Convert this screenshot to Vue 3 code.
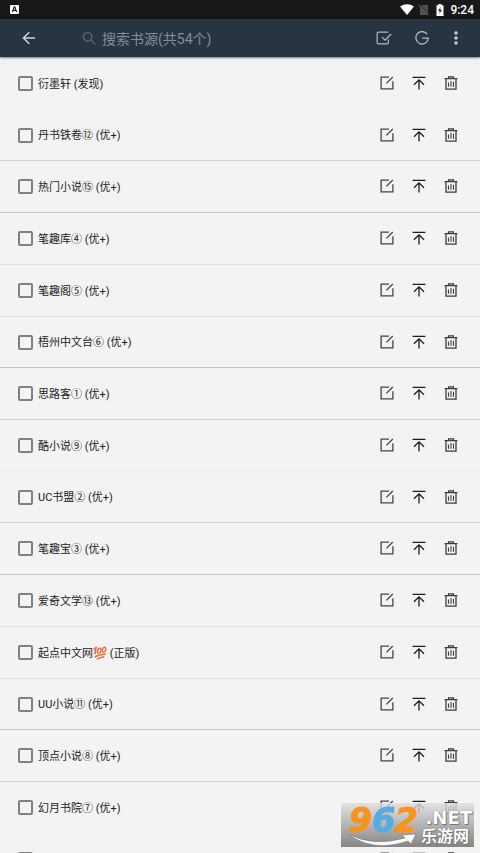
<script setup>
import { ref } from 'vue'

const sources = ref([
  { name: '衍墨轩', tag: '(发现)' },
  { name: '丹书铁卷⑫', tag: '(优+)' },
  { name: '热门小说⑮', tag: '(优+)' },
  { name: '笔趣库④', tag: '(优+)' },
  { name: '笔趣阁⑤', tag: '(优+)' },
  { name: '梧州中文台⑥', tag: '(优+)' },
  { name: '思路客①', tag: '(优+)' },
  { name: '酷小说⑨', tag: '(优+)' },
  { name: 'UC书盟②', tag: '(优+)' },
  { name: '笔趣宝③', tag: '(优+)' },
  { name: '爱奇文学⑬', tag: '(优+)' },
  { name: '起点中文网', tag: '(正版)', hundred: true },
  { name: 'UU小说⑪', tag: '(优+)' },
  { name: '顶点小说⑧', tag: '(优+)' },
  { name: '幻月书院⑦', tag: '(优+)' },
  { name: '', tag: '' },
])
const query = ref('')
</script>

<template>
  <div class="screen">
    <div class="status">
      <svg class="status-app" viewBox="0 0 9 9" aria-hidden="true">
        <rect width="9" height="9" rx="1" fill="#fff" />
        <path d="M2.4 7 4.1 2h.8l1.7 5M3.2 5.4h2.6" fill="none" stroke="#181818" stroke-width="1.1" />
      </svg>
      <div class="status-right">
        <svg class="wifi" viewBox="0 0 14 11" aria-hidden="true">
          <path d="M0 2.6C4-.7 10-.7 14 2.6L7 11z" fill="#fff" />
        </svg>
        <svg class="sim" viewBox="0 0 11 12" aria-hidden="true">
          <path d="M4 1h6v10H2V3z" fill="#505050" />
          <path d="M1.3 .4 11 10.6" stroke="#181818" stroke-width="1" />
          <path d="M.5 .8 10.5 11.3" stroke="#6a6a6a" stroke-width="1" />
        </svg>
        <svg class="battery" viewBox="0 0 8 12" aria-hidden="true">
          <path d="M2.5 0h3v1.2H7.5V12H.5V1.2h2z" fill="#fff" />
          <path d="M4.6 2.8 2.2 7h1.6l-.5 3L5.8 5.8H4.2z" fill="#181818" />
        </svg>
        <span class="clock">9:24</span>
      </div>
    </div>

    <header class="bar">
      <button class="icon-btn" type="button" aria-label="返回">
        <svg width="16" height="16" viewBox="0 0 16 16" fill="none" stroke="#d0d4d8" stroke-width="1.5">
          <path d="M14 8H2.5M8.2 2.2 2.4 8l5.8 5.8" />
        </svg>
      </button>
      <label class="search">
        <svg width="14" height="14" viewBox="0 0 14 14" fill="none" stroke="#5c6570" stroke-width="1.4" aria-hidden="true">
          <circle cx="5.6" cy="5.8" r="4.2" />
          <path d="m8.6 8.8 4.8 4.8" />
        </svg>
        <input v-model="query" type="text" placeholder="搜索书源(共54个)" aria-label="搜索书源" />
      </label>
      <button class="icon-btn check-all" type="button" aria-label="校验">
        <svg width="16" height="14" viewBox="0 0 16 14" fill="none" stroke="#b4b9be" stroke-width="1.2">
          <path d="M12.4 1.1H2.6Q1.1 1.1 1.1 2.6v8.8q0 1.5 1.5 1.5h8.3q1.5 0 1.5-1.5V8.6" />
          <path d="m6 6.2 3 3L15.2 3" />
        </svg>
      </button>
      <button class="icon-btn group" type="button" aria-label="分组">
        <svg width="16" height="14" viewBox="0 0 16 14" fill="none" stroke="#b4b9be" stroke-width="1.3">
          <path d="M13.2 3.2A6.2 6.2 0 1 0 14.3 7.2H8.2" />
        </svg>
      </button>
      <button class="icon-btn more" type="button" aria-label="更多">
        <svg width="4" height="14" viewBox="0 0 4 14" fill="#c4c8cc">
          <circle cx="2" cy="2" r="1.8" /><circle cx="2" cy="7" r="1.8" /><circle cx="2" cy="12" r="1.8" />
        </svg>
      </button>
    </header>

    <ul class="list">
      <li v-for="(s, i) in sources" :key="i" class="row">
        <label class="pick">
          <input type="checkbox" :aria-label="s.name || '书源'" />
          <span class="name">{{ s.name }}<svg
            v-if="s.hundred" class="hundred" viewBox="0 0 14 14" fill="none" stroke="#e8733f" role="img" aria-label="100">
            <path d="m.8 3.4 2-1.5L2 8.2" stroke-width="1.8" />
            <ellipse cx="6.2" cy="4.7" rx="1.6" ry="2.6" stroke-width="1.5" transform="rotate(14 6.2 4.7)" />
            <ellipse cx="11" cy="3.8" rx="1.6" ry="2.6" stroke-width="1.5" transform="rotate(14 11 3.8)" />
            <path d="M1.5 11Q6 8.7 12.8 8.1M4 13.2Q7 11.3 11.2 10.8" stroke-width="1.5" />
          </svg> {{ s.tag }}</span>
        </label>
        <div class="actions">
          <button type="button" aria-label="编辑">
            <svg width="14" height="14" viewBox="0 0 14 14" fill="none" stroke="#444" stroke-width="1.3">
              <path d="M9 1.1H1.1v11.8h11.8V5.2M6.4 7.4 12.8 1" />
            </svg>
          </button>
          <button type="button" aria-label="置顶">
            <svg width="14" height="14" viewBox="0 0 14 14" fill="none" stroke="#1c1c1c" stroke-width="1.3">
              <path d="M.6 1.4h12.8M7 13.4V4M2 8.8l5-5 5 5" />
            </svg>
          </button>
          <button type="button" aria-label="删除">
            <svg width="14" height="14" viewBox="0 0 14 14" fill="none" stroke="#3c3c3c" stroke-width="1.3">
              <path d="M.6 2.6h12.8M4.6 2.4V.8h4.8v1.6M2 2.8v10.4h10V2.8" />
              <path d="M4.5 6.4v4.4M7 5v5.8M9.5 5.8v5" stroke-width="1.1" />
            </svg>
          </button>
        </div>
      </li>
    </ul>

    <div class="mark">
      <svg class="swoosh" viewBox="0 0 133 44" aria-hidden="true">
        <path d="M7 31Q32 44 64 35L61 32 75 31 70 41 67 38Q32 50 7 31z" fill="#f8f8f8" stroke="#777" stroke-width=".6" />
      </svg>
      <div class="digits"><span>9</span><span class="blue">6</span><span>2</span></div>
      <div class="words"><span class="net">.NET</span><span class="cn">乐游网</span></div>
    </div>
  </div>
</template>

<style>
body {
  background: #f3f3f3;
}
</style>

<style scoped>
.screen {
  position: relative;
  display: flex;
  flex-direction: column;
  height: 100vh;
  overflow: hidden;
  background: #f3f3f3;
  font-family: Roboto, "Noto Sans CJK SC", sans-serif;
  color: #222;
}
svg {
  display: block;
}
button {
  display: flex;
  align-items: center;
  justify-content: center;
  padding: 0;
  border: 0;
  background: none;
}
.status {
  flex: none;
  display: flex;
  align-items: center;
  justify-content: space-between;
  height: 19px;
  padding: 0 6px 0 10px;
  background: #181818;
}
.status-app {
  width: 9px;
  height: 9px;
}
.status-right {
  display: flex;
  align-items: center;
}
.wifi {
  width: 14px;
  height: 11px;
  margin-right: 4px;
}
.sim {
  width: 11px;
  height: 12px;
  margin-right: 7px;
}
.battery {
  width: 8px;
  height: 12px;
  margin-right: 6px;
}
.clock {
  padding-top: 1px;
  font-size: 12px;
  font-weight: 500;
  line-height: 18px;
  color: #fff;
}
.bar {
  flex: none;
  position: relative;
  display: flex;
  align-items: center;
  height: 38px;
  padding: 0 22px 0 21px;
  background: #293442;
  box-shadow: 0 1px 2px rgba(0, 0, 0, 0.5);
}
.icon-btn {
  flex: none;
}
.search {
  flex: 1;
  display: flex;
  align-items: center;
  gap: 6px;
  min-width: 0;
  margin-left: 45px;
}
.search svg {
  flex: none;
}
.search input {
  flex: 1;
  min-width: 0;
  height: 30px;
  padding: 2px 0 0;
  border: 0;
  outline: 0;
  background: none;
  color: #fff;
  font: inherit;
  font-size: 14px;
}
.search input::placeholder {
  color: #878d95;
  opacity: 1;
}
.check-all {
  margin-right: 22px;
}
.group {
  margin-right: 24px;
}
.list {
  flex: 1;
  min-height: 0;
  overflow: hidden;
  margin: 0;
  padding: 1px 0 0;
  list-style: none;
}
.row {
  box-sizing: border-box;
  display: flex;
  align-items: center;
  justify-content: space-between;
  height: 52px;
  padding: 0 22px 0 18px;
  border-bottom: 1px solid #d4d4d4;
}
.row:nth-child(7n + 2),
.row:nth-child(7n + 6) {
  height: 51px;
}
.row:nth-child(7n + 1) {
  border-bottom-color: #ededed;
}
.row:nth-child(7n + 3),
.row:nth-child(7n + 6) {
  border-bottom-color: #c6c6c6;
}
.row:nth-child(7n + 4),
.row:nth-child(7n + 5) {
  border-bottom-color: #e0e0e0;
}
.pick {
  display: flex;
  align-items: center;
  gap: 5px;
}
.pick input {
  appearance: none;
  box-sizing: border-box;
  width: 15px;
  height: 15px;
  margin: 0;
  border: 2px solid #808080;
  border-radius: 2px;
}
.pick input:checked {
  background: #808080;
}
.name {
  padding-top: 2px;
  font-size: 11px;
  line-height: 18px;
}
.hundred {
  display: inline-block;
  width: 14px;
  height: 14px;
  vertical-align: -3px;
}
.actions {
  display: flex;
  gap: 18px;
  padding-bottom: 1px;
}
.mark {
  position: absolute;
  right: 6px;
  bottom: 6px;
  box-sizing: border-box;
  width: 133px;
  height: 44px;
  padding: 2px 0 0 8px;
  background: linear-gradient(rgba(222, 222, 222, 0.8), rgba(130, 130, 130, 0.97));
}
.swoosh {
  position: absolute;
  inset: 0;
}
.digits {
  display: flex;
  font: italic bold 33px/32px "DejaVu Sans", sans-serif;
  color: #f7941d;
  -webkit-text-stroke: 1px #f7941d;
}
.blue {
  color: #55acdf;
  -webkit-text-stroke-color: #55acdf;
}
.words {
  position: absolute;
  right: 2px;
  top: 5px;
  display: flex;
  flex-direction: column;
  align-items: flex-end;
  color: #fff;
  text-shadow: 0 0 1px #555, 1px 1px 1px #777;
}
.net {
  font: bold 18px/20px "DejaVu Sans", sans-serif;
}
.cn {
  padding-right: 3px;
  font-size: 16px;
  font-weight: bold;
  line-height: 18px;
}
</style>
